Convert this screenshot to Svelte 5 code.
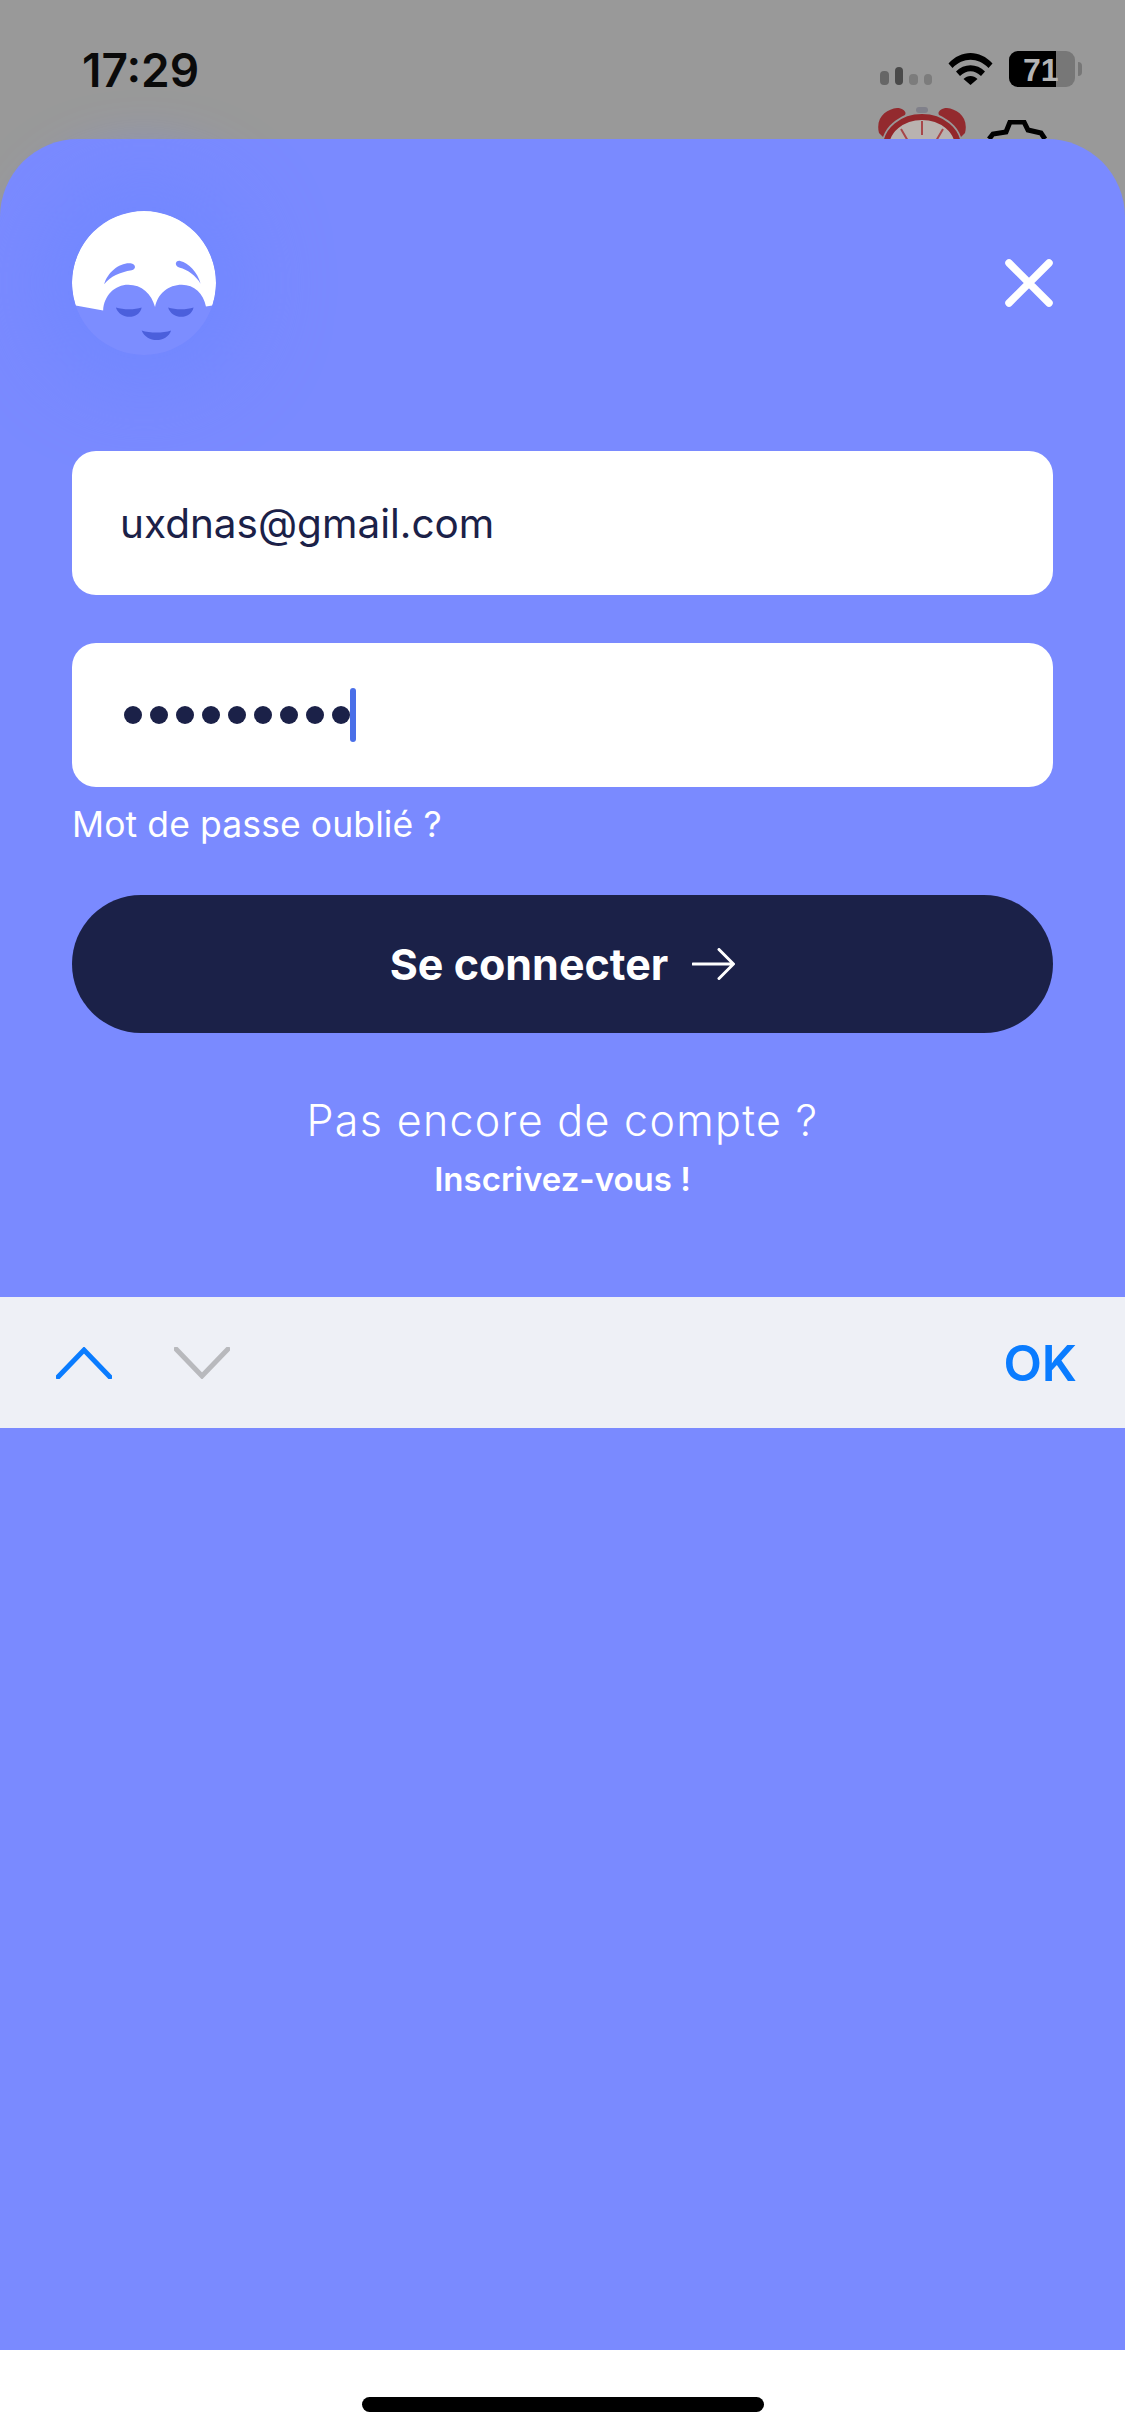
<script>
  const dots = Array(9).fill(0);
</script>

<div class="screen">
  <header class="behind">
    <div class="status">
      <span class="time">17:29</span>
      <div class="status-icons">
        <div class="signal">
          <i class="mid"></i><i class="on"></i><i></i><i></i>
        </div>
        <svg class="wifi" viewBox="0 0 45 33">
          <path d="M0.5 11.5 C13 -2.5 32 -2.5 44.5 11.5 L40.5 16 C30 5 15 5 4.5 16 Z" />
          <path d="M8 19.5 C16 11 29 11 37 19.5 L33 24 C26.500 17.500 18.500 17.500 12 24 Z" />
          <path d="M15.500 27 C19.500 23 25.500 23 29.500 27 L22.500 33 Z" />
        </svg>
        <div class="battery">
          <div class="level"></div>
          <span>71</span>
        </div>
        <div class="nub"></div>
      </div>
    </div>
    <div class="app-icons">
      <svg class="alarm" viewBox="0 0 90 40">
        <ellipse cx="45" cy="40" rx="36" ry="30" fill="#b9b3b0" stroke="#93272b" stroke-width="6" />
        <path d="M45 14v14M24 22l7 12M66 22l-7 12" stroke="#a8474a" stroke-width="2" />
        <path d="M2 26 C-2 10 10 2 20 1 C26 1 30 5 28 8 C20 12 10 18 6 30 Z" fill="#932a2e" />
        <path d="M88 26 C92 10 80 2 70 1 C64 1 60 5 62 8 C70 12 80 18 84 30 Z" fill="#932a2e" />
        <rect x="39" y="0" width="12" height="6" rx="3" fill="#80808a" />
      </svg>
      <svg class="gear" viewBox="0 0 60 20">
        <path d="M2 19 L6 14 L19 12 L23 2 L37 2 L41 10 L54 13 L58 19" fill="none" stroke="#000" stroke-width="5" />
      </svg>
    </div>
  </header>

  <main class="sheet">
    <div class="top">
      <svg class="logo" viewBox="97 63 430 430">
        <circle cx="312" cy="278" r="215" fill="#7c8dff" />
        <path
          d="M108 345 L190 360 C192 315 225 283 265 283 C305 283 335 310 345 350 C352 310 385 283 425 283 C462 283 490 310 497 348 L516 345 A215 215 0 1 0 108 345 Z"
          fill="#fff"
        />
        <path d="M193 282 C203 245 240 216 272 219 C288 222 290 236 275 240 C240 246 212 258 193 282 Z" fill="#7a8bff" />
        <path d="M481 280 C472 245 445 218 420 212 C405 210 402 226 417 232 C445 240 465 255 481 280 Z" fill="#7a8bff" />
        <path d="M228 351 C250 358 285 358 305 351 C298 388 240 388 228 351 Z" fill="#4b5fdc" />
        <path d="M384 351 C405 358 440 358 460 351 C452 388 395 388 384 351 Z" fill="#4b5fdc" />
        <path d="M305 420 C330 428 368 428 393 420 C380 458 320 458 305 420 Z" fill="#4b5fdc" />
      </svg>
      <svg class="close" viewBox="0 0 48 48">
        <path d="M4 4 L44 44 M44 4 L4 44" stroke="#fff" stroke-width="7.500" stroke-linecap="round" />
      </svg>
    </div>

    <div class="field email">uxdnas@gmail.com</div>
    <div class="field password">
      {#each dots as _}
        <i class="dot"></i>
      {/each}
      <i class="caret"></i>
    </div>
    <div class="forgot">Mot de passe oublié ?</div>

    <button class="submit">
      <span>Se connecter</span>
      <svg viewBox="0 0 43 32" width="43" height="32">
        <path d="M1 16 H41 M27 1.500 L41.500 16 L27 30.500" fill="none" stroke="#fff" stroke-width="3" stroke-linecap="round" />
      </svg>
    </button>

    <p class="no-account">Pas encore de compte ?</p>
    <p class="signup">Inscrivez-vous !</p>

    <div class="toolbar">
      <svg class="chev" viewBox="0 0 56 32">
        <path d="M2 30 L28 3 L54 30" fill="none" stroke="#0a7cff" stroke-width="5" stroke-linecap="round" />
      </svg>
      <svg class="chev" viewBox="0 0 56 32">
        <path d="M2 2 L28 29 L54 2" fill="none" stroke="#b8b9bd" stroke-width="5" stroke-linecap="round" />
      </svg>
      <span class="ok">OK</span>
    </div>
  </main>

  <footer class="home">
    <div class="indicator"></div>
  </footer>
</div>

<style>
  :global(body) {
    margin: 0;
  }
  .screen {
    width: 1125px;
    height: 2436px;
    display: flex;
    flex-direction: column;
    background: #999;
    font-family: Inter, "Liberation Sans", sans-serif;
    overflow: hidden;
  }

  .behind {
    height: 139px;
    flex: none;
    overflow: hidden;
  }
  .status {
    height: 50px;
    padding: 47px 43px 0 82px;
    display: flex;
    justify-content: space-between;
    align-items: flex-start;
  }
  .time {
    font-size: 46px;
    line-height: 46px;
    font-weight: 600;
    color: #0a0a0a;
    letter-spacing: 0;
  }
  .status-icons {
    display: flex;
    align-items: flex-start;
    margin-top: 4px;
  }
  .signal {
    display: flex;
    gap: 6px;
    margin: 16px 16px 0 0;
    height: 18px;
  }
  .signal i {
    width: 8.5px;
    background: #7c7c7c;
    border-radius: 4px;
    height: 11px;
    align-self: flex-end;
  }
  .signal .mid {
    height: 14px;
    background: #666;
  }
  .signal .on {
    height: 18px;
    background: #4a4a4a;
  }
  .wifi {
    width: 45px;
    height: 33px;
    margin: 1px 16px 0 0;
    fill: #000;
  }
  .battery {
    position: relative;
    width: 66px;
    height: 36px;
    background: #777;
    border-radius: 9px;
    overflow: hidden;
  }
  .level {
    width: 47px;
    height: 36px;
    background: #000;
  }
  .battery span {
    position: absolute;
    left: 14px;
    top: 4px;
    font-family: "Liberation Sans", sans-serif;
    font-weight: 700;
    font-size: 32px;
    line-height: 30px;
    color: #b4b4b4;
  }
  .nub {
    width: 4px;
    height: 14px;
    margin: 11px 0 0 3px;
    background: #777;
    border-radius: 0 4px 4px 0;
  }
  .app-icons {
    display: flex;
    justify-content: flex-end;
    gap: 20px;
    margin-top: 10px;
    padding-right: 78px;
  }
  .alarm {
    width: 90px;
    height: 40px;
  }
  .gear {
    width: 60px;
    height: 20px;
    margin-top: 13px;
  }

  .sheet {
    flex: 1;
    background: #7a8aff;
    border-radius: 78px 78px 0 0;
    display: flex;
    flex-direction: column;
  }
  .top {
    display: flex;
    justify-content: space-between;
    align-items: flex-start;
    padding: 72px 72px 0;
    height: 240px;
    box-sizing: border-box;
  }
  .logo {
    width: 144px;
    height: 144px;
    border-radius: 50%;
    box-shadow: 0 0 70px 40px #7388ff;
  }
  .close {
    width: 48px;
    height: 48px;
    margin-top: 48px;
  }

  .field {
    margin: 0 72px;
    height: 144px;
    background: #fff;
    border-radius: 24px;
    display: flex;
    align-items: center;
    padding-left: 48px;
    color: #1b2148;
    font-size: 40.5px;
  }
  .email {
    margin-top: 72px;
  }
  .password {
    margin-top: 48px;
    padding-left: 52px;
    gap: 8px;
  }
  .dot {
    width: 18px;
    height: 18px;
    border-radius: 50%;
    background: #1b2148;
  }
  .caret {
    width: 6px;
    height: 54px;
    border-radius: 3px;
    background: #4a6fe8;
    margin-left: -8px;
  }
  .forgot {
    margin: 13px 0 0 72px;
    height: 50px;
    line-height: 50px;
    font-size: 35.5px;
    letter-spacing: 0.1px;
    color: #fff;
  }

  .submit {
    margin: 45px 72px 0;
    height: 138px;
    border: 0;
    border-radius: 69px;
    background: #1b2148;
    color: #fff;
    display: flex;
    justify-content: center;
    align-items: center;
    gap: 24px;
    font-family: inherit;
    font-size: 43px;
    font-weight: 700;
  }
  .no-account {
    margin: 57px 0 0;
    text-align: center;
    font-size: 43px;
    line-height: 60px;
    letter-spacing: 1.3px;
    font-weight: 300;
    color: #fff;
  }
  .signup {
    margin: 9px 0 0;
    text-align: center;
    font-size: 33px;
    line-height: 40px;
    font-weight: 600;
    color: #fff;
  }

  .toolbar {
    margin-top: 98px;
    height: 131px;
    background: #eef0f6;
    display: flex;
    align-items: center;
    padding: 0 48px 0 56px;
    gap: 62px;
  }
  .chev {
    width: 56px;
    height: 32px;
  }
  .ok {
    margin-left: auto;
    color: #0a7cff;
    font-size: 50px;
    font-weight: 600;
  }

  .home {
    height: 86px;
    flex: none;
    background: #fff;
    display: flex;
    justify-content: center;
    padding-top: 47px;
    box-sizing: border-box;
  }
  .indicator {
    width: 402px;
    height: 15px;
    border-radius: 8px;
    background: #000;
  }
</style>
